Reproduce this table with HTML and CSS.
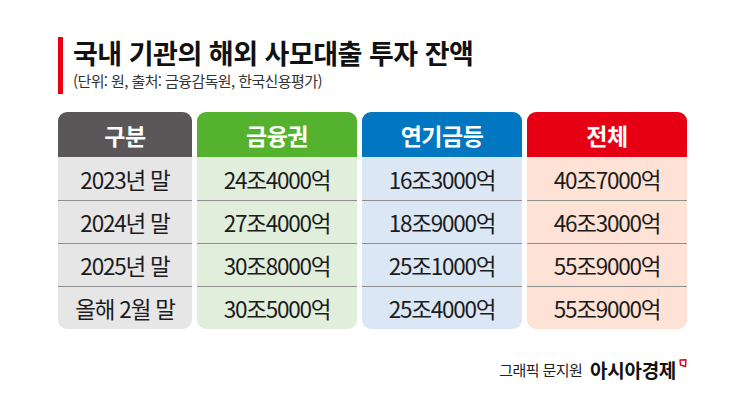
FILE: index.html
```html
<!DOCTYPE html>
<html lang="ko">
<head>
<meta charset="utf-8">
<link rel="stylesheet" href="styles.css">
</head>
<body>
<div class="page">
  <header class="heading">
    <h1 class="title">국내 기관의 해외 사모대출 투자 잔액</h1>
    <p class="sub">(단위: 원, 출처: 금융감독원, 한국신용평가)</p>
  </header>
  <div class="table">
    <div class="col col-gray">
      <div class="th">구분</div>
      <div class="td">2023년 말</div>
      <div class="td">2024년 말</div>
      <div class="td">2025년 말</div>
      <div class="td">올해 2월 말</div>
    </div>
    <div class="col col-green">
      <div class="th">금융권</div>
      <div class="td">24조4000억</div>
      <div class="td">27조4000억</div>
      <div class="td">30조8000억</div>
      <div class="td">30조5000억</div>
    </div>
    <div class="col col-blue">
      <div class="th">연기금등</div>
      <div class="td">16조3000억</div>
      <div class="td">18조9000억</div>
      <div class="td">25조1000억</div>
      <div class="td">25조4000억</div>
    </div>
    <div class="col col-red">
      <div class="th">전체</div>
      <div class="td">40조7000억</div>
      <div class="td">46조3000억</div>
      <div class="td">55조9000억</div>
      <div class="td">55조9000억</div>
    </div>
  </div>
  <footer class="credit">
    <span class="by">그래픽 문지원</span>
    <span class="brand">아시아경제</span>
    <svg class="mark" width="8" height="9" viewBox="0 0 8 9"><polygon points="1,1 7,0.8 6.5,7.5 1.5,6" fill="none" stroke="#e60012" stroke-width="1.4" stroke-linejoin="round"/></svg>
  </footer>
</div>
</body>
</html>
```

FILE: styles.css
```css
html, body {
  margin: 0;
  padding: 0;
  background: #ffffff;
}
body {
  font-family: "Noto Sans CJK KR", "Noto Sans", sans-serif;
  color: #1a1a1a;
}
.page {
  width: 745px;
  height: 418px;
  padding: 37px 0 0 58px;
  box-sizing: border-box;
  display: flex;
  flex-direction: column;
}
.heading {
  border-left: 5px solid #e60012;
  padding-left: 10px;
  height: 57px;
  box-sizing: border-box;
}
.title {
  margin: 0;
  font-size: 27px;
  line-height: 32px;
  font-weight: 700;
  letter-spacing: -0.5px;
  color: #111;
}
.sub {
  margin: 2px 0 0 0;
  font-size: 15px;
  line-height: 20px;
  letter-spacing: -0.6px;
  color: #333;
}
.table {
  margin-top: 18px;
  display: grid;
  grid-template-columns: 134px 160px 160px 160px;
  column-gap: 5px;
}
.col {
  display: flex;
  flex-direction: column;
  border-radius: 9px;
  overflow: hidden;
}
.th {
  height: 45px;
  display: flex;
  align-items: center;
  justify-content: center;
  color: #fff;
  font-weight: 700;
  font-size: 23px;
  letter-spacing: -0.5px;
}
.td {
  height: 43px;
  display: flex;
  align-items: center;
  justify-content: center;
  font-size: 22.5px;
  letter-spacing: -1.2px;
  color: #1c1c1c;
}
.td + .td {
  border-top: 1px solid #8f8f8f;
  height: 42px;
}
.col-gray .th { background: #595757; }
.col-gray .td { background: #e6e6e6; }
.col-green .th { background: #55b22f; }
.col-green .td { background: #e1eedc; }
.col-blue .th { background: #0077c0; }
.col-blue .td { background: #dbe7f4; }
.col-red .th { background: #e60013; }
.col-red .td { background: #fde2d5; }
.credit {
  margin-top: 27px;
  width: 629px;
  display: flex;
  justify-content: flex-end;
  align-items: center;
  gap: 6px;
}
.by {
  font-size: 15px;
  letter-spacing: -0.6px;
  color: #222;
}
.brand {
  font-size: 19px;
  font-weight: 700;
  letter-spacing: -0.3px;
  color: #111;
  margin-left: 2px;
}
.mark {
  align-self: flex-start;
  margin-top: 3px;
  margin-left: -3px;
}
```
